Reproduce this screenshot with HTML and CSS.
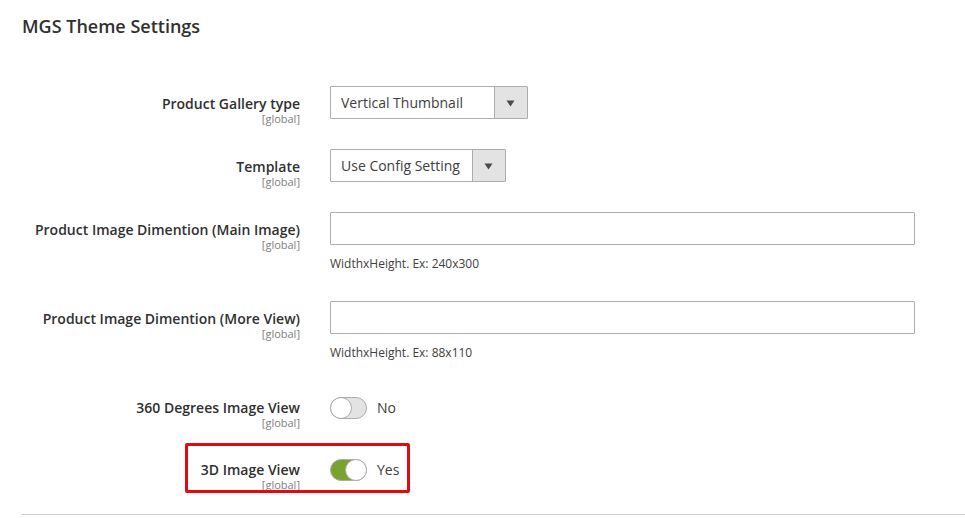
FILE: index.html
```html
<!DOCTYPE html>
<html lang="en">
<head>
<meta charset="utf-8">
<meta name="viewport" content="width=device-width, initial-scale=1">
<title>MGS Theme Settings</title>
<link rel="stylesheet" href="styles.css">
</head>
<body>
<form class="section">
  <h2 class="section-title">MGS Theme Settings</h2>
  <div class="fields">
    <div class="field">
      <div class="field-label"><label for="gallery">Product Gallery type</label><span class="scope">[global]</span></div>
      <div class="field-control">
        <select id="gallery" class="select select-wide"><option>Vertical Thumbnail</option></select>
      </div>
    </div>
    <div class="field">
      <div class="field-label"><label for="template">Template</label><span class="scope">[global]</span></div>
      <div class="field-control">
        <select id="template" class="select"><option>Use Config Setting</option></select>
      </div>
    </div>
    <div class="field">
      <div class="field-label"><label for="main-image">Product Image Dimention (Main Image)</label><span class="scope">[global]</span></div>
      <div class="field-control">
        <input id="main-image" class="text" type="text" aria-describedby="main-note">
        <p id="main-note" class="note">WidthxHeight. Ex: 240x300</p>
      </div>
    </div>
    <div class="field">
      <div class="field-label"><label for="more-view">Product Image Dimention (More View)</label><span class="scope">[global]</span></div>
      <div class="field-control">
        <input id="more-view" class="text" type="text" aria-describedby="more-note">
        <p id="more-note" class="note">WidthxHeight. Ex: 88x110</p>
      </div>
    </div>
    <div class="field">
      <div class="field-label"><label for="view-360">360 Degrees Image View</label><span class="scope">[global]</span></div>
      <div class="field-control switch">
        <input id="view-360" class="toggle" type="checkbox"><span>No</span>
      </div>
    </div>
    <div class="field highlighted">
      <div class="field-label"><label for="view-3d">3D Image View</label><span class="scope">[global]</span></div>
      <div class="field-control switch">
        <input id="view-3d" class="toggle" type="checkbox" checked><span>Yes</span>
      </div>
    </div>
  </div>
</form>
</body>
</html>
```
FILE: styles.css
```css
*,
*::before,
*::after {
  box-sizing: border-box;
}

body {
  margin: 0;
  background: #fff;
  color: #303030;
  font-family: "Open Sans", sans-serif;
  font-size: 14px;
  line-height: 20px;
}

.section {
  margin-left: 22px;
  padding: 14px 0 30px;
  border-bottom: 1px solid #ccc;
}

.section-title {
  margin: 0 0 48px;
  font-size: 18px;
  font-weight: 600;
  line-height: 24px;
}

.fields {
  display: grid;
  gap: 30px;
  padding-right: 50px;
}

.field {
  position: relative;
  display: grid;
  grid-template-columns: 278px 1fr;
  column-gap: 30px;
  align-items: start;
}

.field-label {
  display: flex;
  flex-direction: column;
  height: 32px;
  padding-top: 9px;
  text-align: right;
  font-weight: 600;
  line-height: 18px;
}

.scope {
  color: #808080;
  font-size: 11px;
  font-weight: 400;
  line-height: 12px;
}

.field-control {
  color: #404040;
}

.select,
.text {
  display: block;
  height: 33px;
  border: 1px solid #adadad;
  border-radius: 1px;
  background: #fff;
  color: inherit;
  font: inherit;
}

.text {
  width: 100%;
  padding: 0 10px;
}

.select {
  width: 176px;
  padding: 0 44px 0 10px;
  appearance: none;
  background:
    url("data:image/svg+xml,%3Csvg xmlns='http://www.w3.org/2000/svg' width='33' height='31'%3E%3Cpath fill='%23e3e3e3' d='M0 0h33v31H0z'/%3E%3Cpath fill='%23adadad' d='M0 0h1v31H0z'/%3E%3Cpath fill='%23514943' d='M12.5 13.5h8l-4 6z'/%3E%3C/svg%3E")
    right center no-repeat #fff;
}

.select-wide {
  width: 198px;
}

.note {
  margin: 11px 0 0;
  font-size: 12px;
  line-height: 15px;
}

.switch {
  display: flex;
  align-items: center;
  gap: 10px;
  padding-top: 7px;
}

.toggle {
  display: flex;
  width: 37px;
  height: 22px;
  margin: 0;
  appearance: none;
  border: 1px solid #adadad;
  border-radius: 11px;
  background: #e3e3e3;
}

.toggle::before {
  content: "";
  width: 22px;
  height: 22px;
  margin: -1px;
  border: 1px solid #adadad;
  border-radius: 50%;
  background: #fff;
}

.toggle:checked {
  justify-content: flex-end;
  background: #79a22e;
}

.highlighted::after {
  content: "";
  position: absolute;
  top: -9px;
  left: 163px;
  width: 225px;
  height: 50px;
  border: 3px solid #e6080c;
  border-radius: 2px;
  pointer-events: none;
}
```
